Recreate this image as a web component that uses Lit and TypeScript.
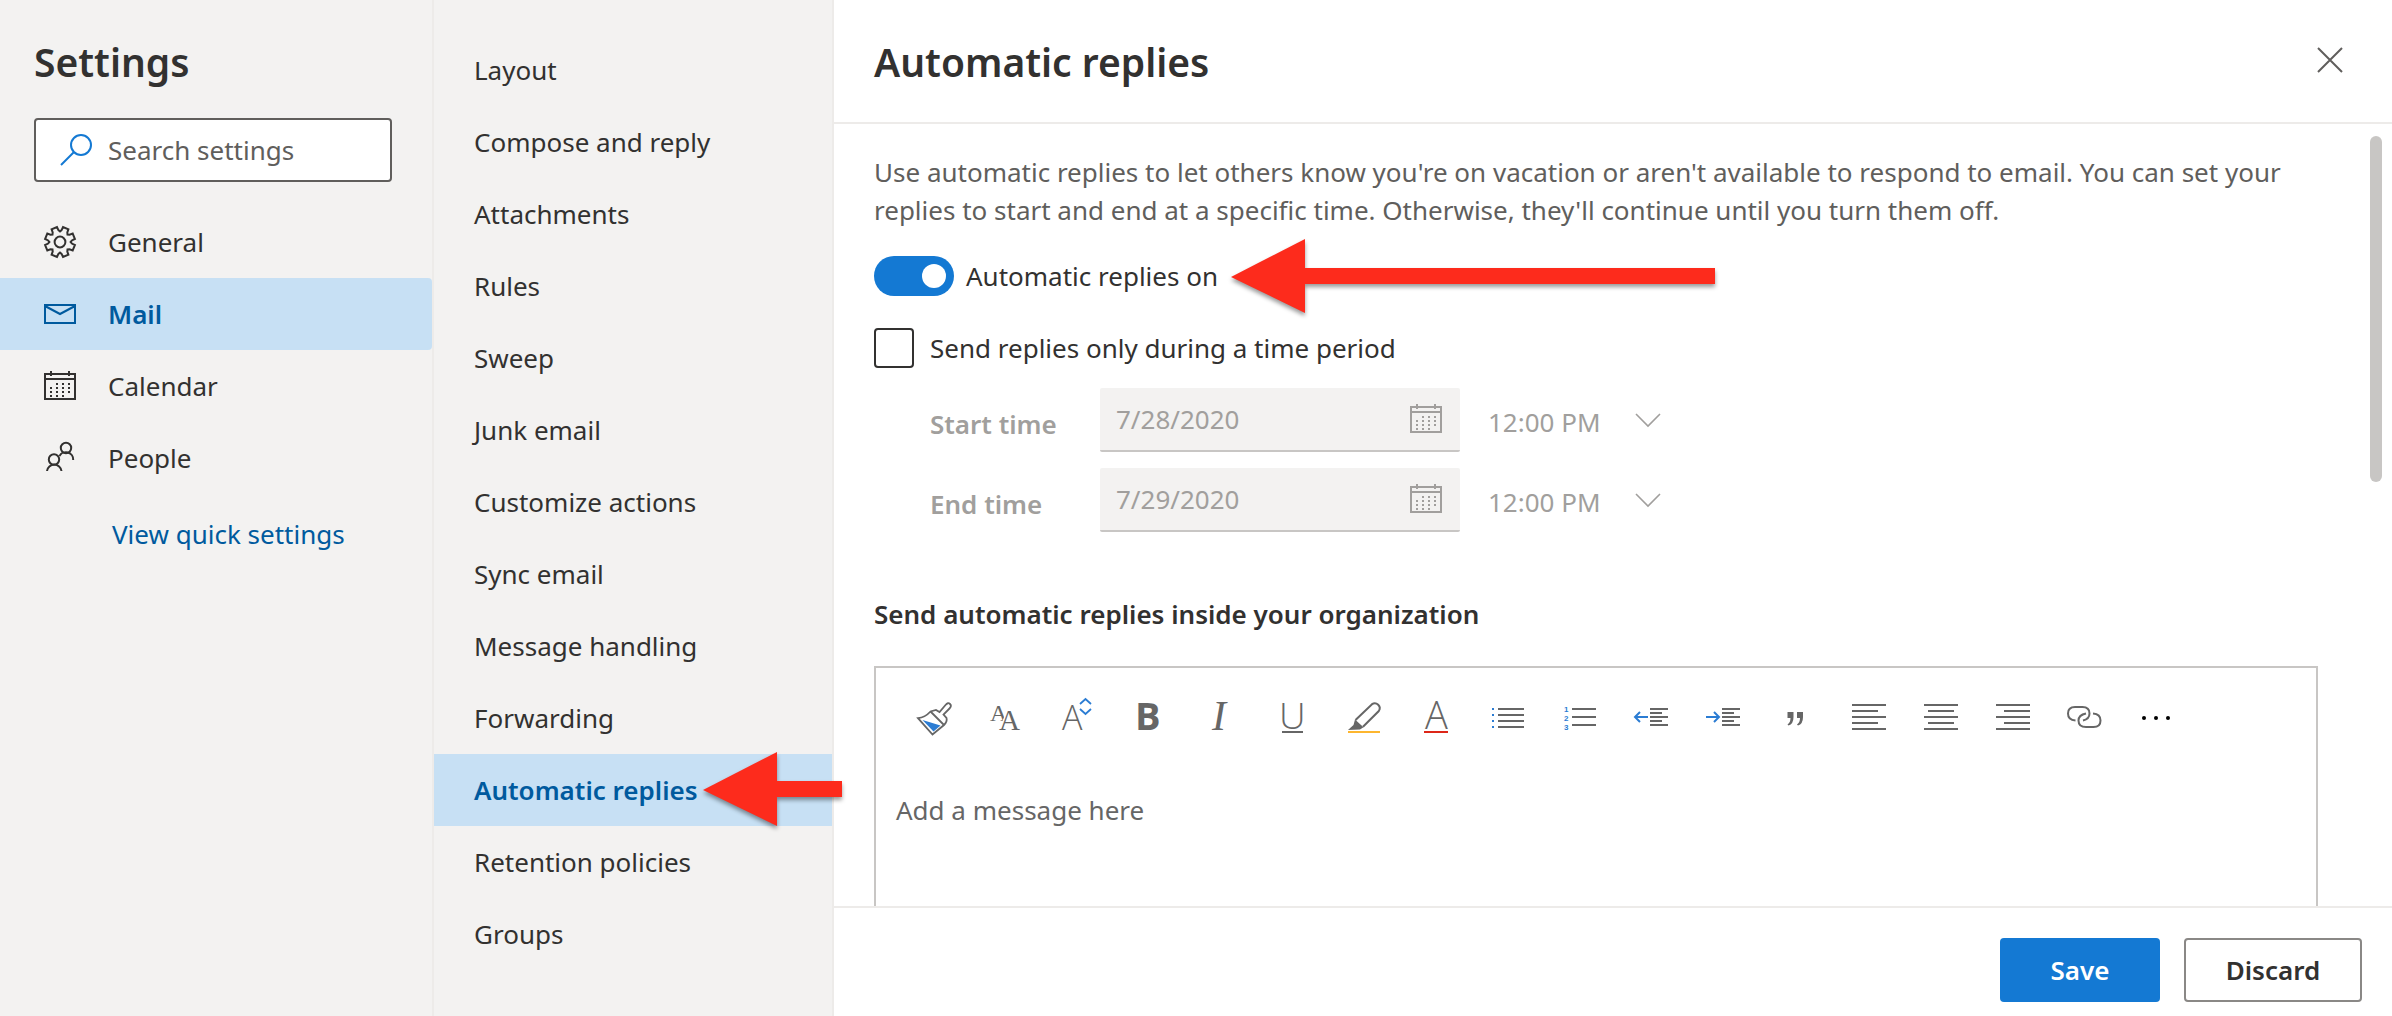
import { LitElement, html, svg, css } from "lit";
import type { SVGTemplateResult } from "lit";
import { customElement, property, state } from "lit/decorators.js";
import { classMap } from "lit/directives/class-map.js";

/** Outline of an eight-toothed gear centred in a 32px box. */
function gearOutline(): string {
  const points: string[] = [];
  const put = (radius: number, degrees: number) => {
    const a = ((degrees - 90) * Math.PI) / 180;
    points.push(`${(16 + radius * Math.cos(a)).toFixed(2)} ${(16 + radius * Math.sin(a)).toFixed(2)}`);
  };
  for (let i = 0; i < 8; i++) {
    const mid = 22.5 + i * 45;
    put(10.6, mid - 22.5);
    put(12, mid - 15);
    put(15.2, mid - 11);
    put(15.2, mid + 11);
    put(12, mid + 15);
  }
  return `M${points.join("L")}Z`;
}

const calendarDots: SVGTemplateResult[] = [];
for (let row = 0; row < 4; row++) {
  for (let col = 0; col < 4; col++) {
    if ((row === 0 && col === 0) || (row === 3 && col === 3)) continue;
    calendarDots.push(svg`<rect x=${6 + col * 6} y=${13 + row * 4} width="2" height="2" fill="currentColor" stroke="none"/>`);
  }
}

const lines = (rows: number[][]) =>
  rows.map(([x1, x2, y]) => svg`<path d=${`M${x1} ${y}H${x2}`} stroke-width="2"/>`);

const BLUE = "#2b7cd3";

const icons: Record<string, SVGTemplateResult> = {
  search: svg`<circle cx="21" cy="11" r="10"/><path d="M14 18L1 31"/>`,
  gear: svg`<path d=${gearOutline()}/><circle cx="16" cy="16" r="5.4"/>`,
  mail: svg`<path d="M1 7H31V25H1ZM1 8L16 16L31 8"/>`,
  calendar: svg`<path d="M1 4H31V29H1ZM1 9H31M7 1V6M25 1V6"/>${calendarDots}`,
  people: svg`<circle cx="22" cy="6" r="5.2"/><circle cx="10" cy="17.5" r="5.2"/>
    <path d="M3 29A7.3 7.3 0 0 1 17.5 29M15.5 14A7.3 7.3 0 0 1 29.2 18"/>`,
  close: svg`<path d="M4 4L28 28M28 4L4 28"/>`,
  chevron: svg`<path d="M4 10L16 22L28 10" stroke-width="1.6"/>`,
  painter: svg`
    <path d="M4 18.2Q11 17.5 16.500 11.500L22 10L25.500 12L31.500 5Q34 2 36 4Q38 6 35.500 8.500L29.500 14.500L32.500 18Q33.500 21.500 30 25L18.500 34.500Z" stroke-width="1.8"/>
    <path d="M16.500 11.500L30 25" stroke-width="1.8"/>
    <path d="M8.500 20L26.500 25.500L19.500 31.500Z" fill=${BLUE} stroke="none"/>`,
  font: svg`<text class="serif" x="4" y="21" font-size="24">A</text>
    <path d="M13 30L20 12L26 12L33 30Z" fill="#fff" stroke="none"/>
    <text class="serif" x="13" y="30" font-size="29">A</text>`,
  size: svg`<text class="light" x="4" y="30" font-size="34">A</text>
    <path d="M22 4L27.500 -1L33 4M22 9L27.500 14L33 9" stroke=${BLUE} stroke-width="1.8"/>`,
  bold: svg`<text class="heavy" x="5" y="30" font-size="38">B</text>`,
  italic: svg`<text class="slant" x="10" y="30" font-size="42">I</text>`,
  underline: svg`<text class="light" x="5" y="29" font-size="37">U</text><path d="M8 32H29"/>`,
  highlight: svg`<path d="M9.500 20L26 4.200A4.900 4.900 0 0 1 32.800 11L17 26.800"/>
    <path d="M9 19.500L17.500 27.200L14 29.500L2 30L7.500 25Z" fill="currentColor" stroke="none"/>
    <path d="M2 32H34" stroke="#fdb62f"/>`,
  color: svg`<text class="light" x="7" y="29" font-size="38">A</text><path d="M6 32H30" stroke="#dd2618"/>`,
  bullets: svg`${lines([[8, 34, 9], [8, 34, 15], [8, 34, 21], [8, 34, 27]])}
    <path d="M2 9H4M2 15H4M2 21H4M2 27H4" stroke=${BLUE}/>`,
  numbers: svg`${lines([[10, 34, 9], [10, 34, 17], [10, 34, 25]])}
    <g class="digit" font-size="8"><text x="2" y="12">1</text><text x="2" y="21">2</text><text x="2" y="30">3</text></g>`,
  outdent: svg`${lines([[16, 34, 9], [16, 28, 13], [16, 34, 17], [16, 28, 21], [16, 34, 25]])}
    <path d="M14 17H1M6 12L1 17L6 22" stroke=${BLUE}/>`,
  indent: svg`${lines([[16, 34, 9], [16, 28, 13], [16, 34, 17], [16, 28, 21], [16, 34, 25]])}
    <path d="M0 17H13M8 12L13 17L8 22" stroke=${BLUE}/>`,
  quote: svg`<path d="M9.500 12H15.500V17Q15.500 24 10.500 25.500L9.500 24.500Q12.500 22.500 12.500 18H9.500ZM19 12H25V17Q25 24 20 25.500L19 24.500Q22 22.500 22 18H19Z" fill="currentColor" stroke="none"/>`,
  left: svg`${lines([[2, 36, 5], [2, 28, 11], [2, 36, 17], [2, 28, 23], [2, 36, 29]])}`,
  center: svg`${lines([[2, 36, 5], [6, 32, 11], [2, 36, 17], [6, 32, 23], [2, 36, 29]])}`,
  right: svg`${lines([[2, 36, 5], [10, 36, 11], [2, 36, 17], [10, 36, 23], [2, 36, 29]])}`,
  link: svg`<path d="M9.500 20.500Q2 20 2 13.500Q2 7 9 7H16.500Q23.500 7 23.500 13.500Q23.500 19 17 20.500"/>
    <path d="M27 13.500Q34.500 14 34.500 20.500Q34.500 27 27.500 27H20Q12.500 27 12.500 20.500Q12.500 15 20 13.500"/>`,
  more: svg`<g fill="#000" stroke="none"><circle cx="6" cy="18" r="2"/><circle cx="18" cy="18" r="2"/><circle cx="30" cy="18" r="2"/></g>`,
};

@customElement("ui-icon")
export class UiIcon extends LitElement {
  static styles = css`
    :host { display: inline-flex; flex: none; }
    .glyph { display: block; overflow: visible; fill: none; stroke: currentColor; stroke-width: 2; }
    text { fill: currentColor; stroke: none; }
    .light { font-family: "Open Sans", sans-serif; font-weight: 300; }
    .heavy { font-family: "Open Sans", sans-serif; font-weight: 700; }
    .serif { font-family: "Liberation Serif", serif; }
    .slant { font-family: "Liberation Serif", serif; font-style: italic; }
    .digit text { fill: #2b7cd3; font-family: "Liberation Sans", sans-serif; font-weight: 700; }
  `;
  @property() name = "";
  @property({ type: Number }) size = 32;

  render() {
    return html`<svg class="glyph" width=${this.size} height=${this.size}
      viewBox=${`0 0 ${this.size} ${this.size}`} aria-hidden="true">${icons[this.name]}</svg>`;
  }
}

/** Red pointer; the shaft stretches to the host's width. */
@customElement("red-arrow")
export class RedArrow extends LitElement {
  static styles = css`
    :host { display: flex; align-items: center; height: 74px; pointer-events: none; filter: drop-shadow(0 3px 2px rgba(0, 0, 0, 0.4)); }
    .head { flex: none; display: block; fill: #fd2b1c; }
    .shaft { flex: 1; height: 16px; background: #fd2b1c; }
  `;
  render() {
    return html`<svg class="head" width="74" height="74" viewBox="0 0 74 74" aria-hidden="true"><path d="M0 38L74 0V74Z"/></svg><span class="shaft"></span>`;
  }
}

const categories = [
  { icon: "gear", label: "General" },
  { icon: "mail", label: "Mail" },
  { icon: "calendar", label: "Calendar" },
  { icon: "people", label: "People" },
];

const sections = [
  "Layout", "Compose and reply", "Attachments", "Rules", "Sweep", "Junk email", "Customize actions",
  "Sync email", "Message handling", "Forwarding", "Automatic replies", "Retention policies", "Groups",
];

const tools = [
  ["painter", "Format painter"], ["font", "Font"], ["size", "Font size"], ["bold", "Bold"],
  ["italic", "Italic"], ["underline", "Underline"], ["highlight", "Highlight"], ["color", "Font color"],
  ["bullets", "Bullets"], ["numbers", "Numbering"], ["outdent", "Decrease indent"], ["indent", "Increase indent"],
  ["quote", "Quote"], ["left", "Align left"], ["center", "Align center"], ["right", "Align right"],
  ["link", "Insert link"], ["more", "More options"],
];

const periods = [
  { id: "start", label: "Start time", date: "7/28/2020", time: "12:00 PM" },
  { id: "end", label: "End time", date: "7/29/2020", time: "12:00 PM" },
];

@customElement("app-root")
export class AppRoot extends LitElement {
  static styles = css`
    :host { display: block; height: 100vh; font-family: "Noto Sans", "Open Sans", sans-serif; font-size: 26px; line-height: 38px; color: #323130; }
    * { box-sizing: border-box; }
    button, input, select, textarea { font: inherit; color: inherit; margin: 0; }
    button { background: none; border: 0; padding: 0; cursor: pointer; }
    h1, h2, h3, p, ul { margin: 0; padding: 0; list-style: none; }

    .app { display: grid; grid-template-columns: 434px 400px minmax(0, 1fr); height: 100%; background: #fff; }
    .side { background: #f3f2f1; border-right: 2px solid #edebe9; }
    .title { font-size: 39px; line-height: 52px; font-weight: 600; }
    .side .title { padding: 36px 34px 30px; }

    .search { display: flex; align-items: center; gap: 16px; height: 64px; margin: 0 40px 24px 34px; padding: 0 24px; background: #fff; border: 2px solid #605e5c; border-radius: 4px; }
    .search ui-icon { color: #1479d3; }
    .search input { flex: 1; min-width: 0; border: 0; padding: 0; outline: 0; background: none; }
    .search input::placeholder { color: #605e5c; opacity: 1; }

    .item { position: relative; display: flex; align-items: center; gap: 32px; width: 100%; height: 72px; text-align: left; }
    .category { padding-left: 44px; border-radius: 0 4px 4px 0; }
    .section { padding-left: 40px; }
    .item.selected { background: #c7e0f4; color: #005a9e; font-weight: 600; }
    .quick { display: inline-block; margin: 21px 0 0 112px; color: #005a9e; text-decoration: none; }
    .sections { padding-top: 34px; }
    .nav-arrow { position: absolute; z-index: 1; left: 269px; top: -2px; width: 139px; }

    .main { display: flex; flex-direction: column; min-width: 0; height: 100vh; }
    .head { display: flex; align-items: flex-start; justify-content: space-between; flex: none; height: 124px; padding: 36px 46px 0 40px; border-bottom: 2px solid #edebe9; }
    .close { display: flex; align-items: center; height: 48px; color: #605e5c; }
    .viewport { position: relative; flex: 1; min-height: 0; }
    .scroll { height: 100%; overflow: auto; scrollbar-width: none; padding: 29px 74px 0 40px; }
    .thumb { position: absolute; right: 10px; top: 12px; width: 12px; height: 346px; border-radius: 6px; background: #c8c6c4; }
    .intro { color: #605e5c; margin-bottom: 27px; }

    .switch-row { position: relative; display: flex; align-items: center; gap: 12px; width: max-content; }
    .switch { appearance: none; width: 80px; height: 40px; padding: 8px; border-radius: 20px; background: #8a8886; }
    .switch::before { content: ""; display: block; width: 24px; height: 24px; border-radius: 50%; background: #fff; }
    .switch:checked { background: #1479d3; }
    .switch:checked::before { margin-left: auto; }
    .page-arrow { position: absolute; left: 357px; top: -17px; width: 484px; }

    .check-row { display: flex; align-items: center; gap: 16px; width: max-content; margin: 32px 0 20px; }
    .check { appearance: none; width: 40px; height: 40px; border: 2px solid #323130; border-radius: 4px; }
    .check:checked { background: #1479d3; border-color: #1479d3; }

    .periods { display: grid; gap: 16px; padding-left: 56px; color: #a19f9d; }
    .period { display: flex; align-items: center; }
    .period label { width: 170px; padding-top: 8px; font-weight: 600; }
    .date { display: flex; align-items: center; width: 360px; height: 64px; padding: 0 18px 0 16px; background: #f3f2f1; border-bottom: 2px solid #c8c6c4; border-radius: 2px; }
    .date input { flex: 1; min-width: 0; border: 0; padding: 0; background: none; }
    .time { display: grid; align-items: center; width: 200px; margin-left: 14px; }
    .time > * { grid-area: 1 / 1; }
    .time select { appearance: none; width: 100%; height: 64px; padding: 4px 14px 0; border: 0; background: none; opacity: 1; }
    .time ui-icon { justify-self: end; margin-right: 10px; pointer-events: none; }

    .subhead { margin: 63px 0 33px; font-size: 26px; line-height: 38px; font-weight: 600; }
    .editor { border: 2px solid #c8c6c4; color: #666; }
    .toolbar { display: flex; padding: 14px 20px; }
    .tool { display: flex; align-items: center; justify-content: center; width: 72px; height: 72px; }
    .message { display: block; width: 100%; height: 400px; padding: 23px 20px; border: 0; outline: 0; resize: none; background: none; }
    .message::placeholder { color: #666; opacity: 1; }

    .foot { display: flex; justify-content: flex-end; gap: 24px; flex: none; padding: 30px 30px 14px; border-top: 2px solid #edebe9; }
    .btn { height: 64px; border-radius: 4px; font-weight: 600; }
    .save { width: 160px; background: #1479d3; color: #fff; }
    .discard { width: 178px; border: 2px solid #8a8886; background: #fff; }
  `;

  @state() private category = "Mail";
  @state() private section = "Automatic replies";

  render() {
    return html`
      <div class="app">
        <nav class="side" aria-label="Settings">
          <h1 class="title">Settings</h1>
          <label class="search">
            <ui-icon name="search"></ui-icon>
            <input type="text" placeholder="Search settings" aria-label="Search settings" />
          </label>
          <ul>
            ${categories.map(
              (c) => html`<li>
                <button class=${classMap({ item: true, category: true, selected: c.label === this.category })}
                  @click=${() => (this.category = c.label)}>
                  <ui-icon name=${c.icon}></ui-icon><span>${c.label}</span>
                </button>
              </li>`
            )}
          </ul>
          <a class="quick" href="#quick">View quick settings</a>
        </nav>

        <nav class="side sections" aria-label="Mail settings">
          <ul>
            ${sections.map(
              (s) => html`<li>
                <button class=${classMap({ item: true, section: true, selected: s === this.section })}
                  @click=${() => (this.section = s)}>
                  <span>${s}</span>
                  ${s === "Automatic replies" ? html`<red-arrow class="nav-arrow"></red-arrow>` : ""}
                </button>
              </li>`
            )}
          </ul>
        </nav>

        <main class="main">
          <header class="head">
            <h2 class="title">Automatic replies</h2>
            <button class="close" aria-label="Close"><ui-icon name="close"></ui-icon></button>
          </header>

          <div class="viewport">
            <div class="scroll">
              <p class="intro">Use automatic replies to let others know you're on vacation or aren't available to respond to email. You can set your replies to start and end at a specific time. Otherwise, they'll continue until you turn them off.</p>

              <div class="switch-row">
                <input class="switch" id="auto" type="checkbox" role="switch" checked />
                <label for="auto">Automatic replies on</label>
                <red-arrow class="page-arrow"></red-arrow>
              </div>

              <div class="check-row">
                <input class="check" id="limit" type="checkbox" />
                <label for="limit">Send replies only during a time period</label>
              </div>

              <div class="periods">
                ${periods.map(
                  (p) => html`<div class="period">
                    <label for=${p.id}>${p.label}</label>
                    <div class="date">
                      <input id=${p.id} type="text" .value=${p.date} disabled />
                      <ui-icon name="calendar"></ui-icon>
                    </div>
                    <div class="time">
                      <select aria-label=${p.label} disabled><option>${p.time}</option></select>
                      <ui-icon name="chevron"></ui-icon>
                    </div>
                  </div>`
                )}
              </div>

              <h3 class="subhead">Send automatic replies inside your organization</h3>
              <div class="editor">
                <div class="toolbar" role="toolbar" aria-label="Formatting">
                  ${tools.map(
                    ([icon, label]) => html`<button class="tool" aria-label=${label}><ui-icon name=${icon} .size=${36}></ui-icon></button>`
                  )}
                </div>
                <textarea class="message" placeholder="Add a message here" aria-label="Message"></textarea>
              </div>
            </div>
            <div class="thumb"></div>
          </div>

          <footer class="foot">
            <button class="btn save">Save</button>
            <button class="btn discard">Discard</button>
          </footer>
        </main>
      </div>
    `;
  }
}
